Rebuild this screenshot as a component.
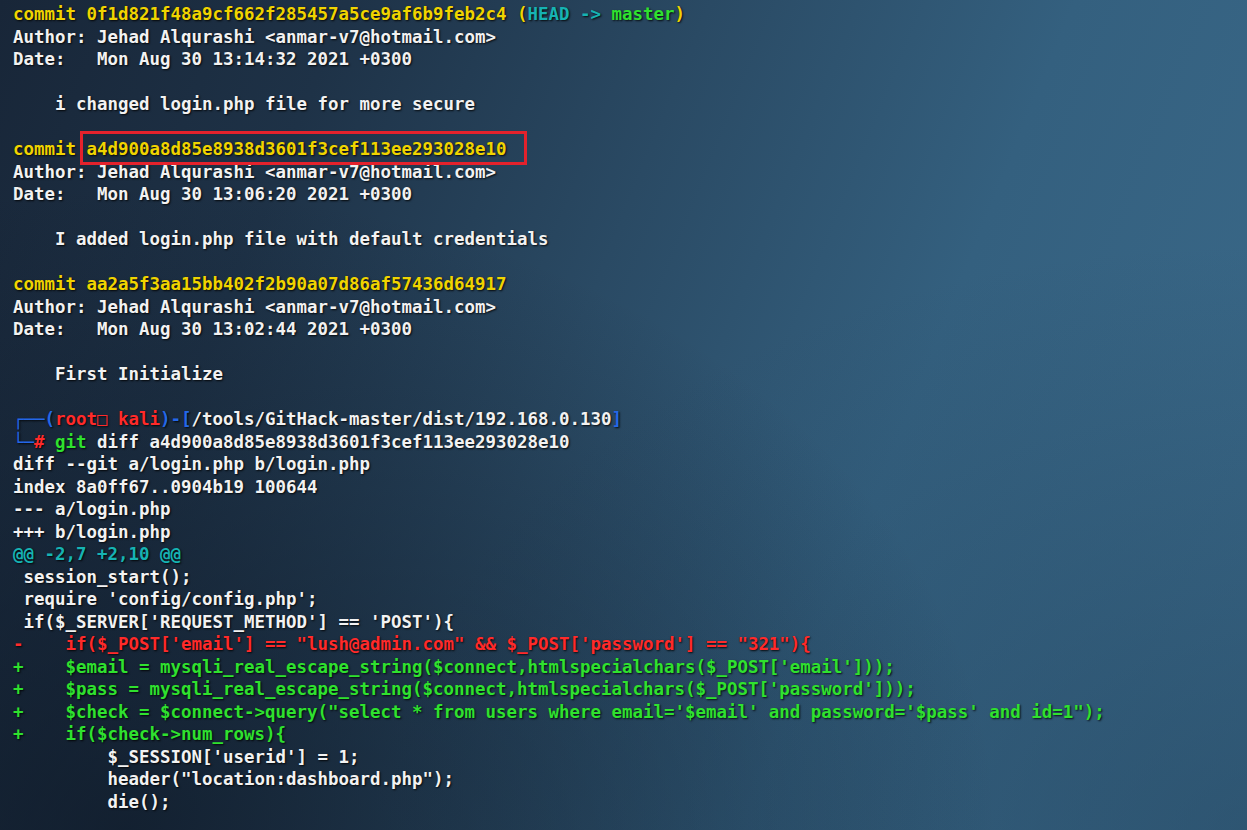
import React from "react";

type Seg = { t: string; c?: string };
type Line = Seg[];

const Y = "text-[#f0d400]";
const C = "text-[#16b3b3]";
const G = "text-[#2fe12f]";
const R = "text-[#ff2a2a]";
const B = "text-[#2468e8]";

const w = (t: string): Line => [{ t }];
const y = (t: string): Line => [{ t, c: Y }];
const r = (t: string): Line => [{ t, c: R }];
const g = (t: string): Line => [{ t, c: G }];

const lines: (Line | "boxed")[] = [
  [
    { t: "commit 0f1d821f48a9cf662f285457a5ce9af6b9feb2c4 (", c: Y },
    { t: "HEAD -> ", c: C },
    { t: "master", c: G },
    { t: ")", c: Y },
  ],
  w("Author: Jehad Alqurashi <anmar-v7@hotmail.com>"),
  w("Date:   Mon Aug 30 13:14:32 2021 +0300"),
  w(""),
  w("    i changed login.php file for more secure"),
  w(""),
  "boxed",
  w("Author: Jehad Alqurashi <anmar-v7@hotmail.com>"),
  w("Date:   Mon Aug 30 13:06:20 2021 +0300"),
  w(""),
  w("    I added login.php file with default credentials"),
  w(""),
  y("commit aa2a5f3aa15bb402f2b90a07d86af57436d64917"),
  w("Author: Jehad Alqurashi <anmar-v7@hotmail.com>"),
  w("Date:   Mon Aug 30 13:02:44 2021 +0300"),
  w(""),
  w("    First Initialize"),
  w(""),
  [
    { t: "┌──(", c: B },
    { t: "root□ kali", c: R },
    { t: ")-[", c: B },
    { t: "/tools/GitHack-master/dist/192.168.0.130" },
    { t: "]", c: B },
  ],
  [
    { t: "└─", c: B },
    { t: "#", c: R },
    { t: " " },
    { t: "git", c: G },
    { t: " diff a4d900a8d85e8938d3601f3cef113ee293028e10" },
  ],
  w("diff --git a/login.php b/login.php"),
  w("index 8a0ff67..0904b19 100644"),
  w("--- a/login.php"),
  w("+++ b/login.php"),
  [{ t: "@@ -2,7 +2,10 @@", c: C }],
  w(" session_start();"),
  w(" require 'config/config.php';"),
  w(" if($_SERVER['REQUEST_METHOD'] == 'POST'){"),
  r(`-    if($_POST['email'] == "lush@admin.com" && $_POST['password'] == "321"){`),
  g(`+    $email = mysqli_real_escape_string($connect,htmlspecialchars($_POST['email']));`),
  g(`+    $pass = mysqli_real_escape_string($connect,htmlspecialchars($_POST['password']));`),
  g(`+    $check = $connect->query("select * from users where email='$email' and password='$pass' and id=1");`),
  g(`+    if($check->num_rows){`),
  w(`         $_SESSION['userid'] = 1;`),
  w(`         header("location:dashboard.php");`),
  w(`         die();`),
];

export default function App() {
  return (
    <div className="w-[1247px] h-[830px] overflow-hidden bg-[linear-gradient(112deg,#182638_0%,#1e3247_22%,#2a4a64_45%,#34607f_68%,#3b6a8a_100%)]">
      <div className="h-full w-full bg-[radial-gradient(ellipse_at_100%_100%,rgba(30,60,85,0.45)_0%,rgba(30,60,85,0)_50%)]">
        <div className="relative h-full w-full bg-[radial-gradient(ellipse_at_10%_100%,rgba(14,24,38,0.75)_0%,rgba(14,24,38,0)_55%)]">
          <pre className="pl-[13px] pt-[3px] font-['DejaVu_Sans_Mono','Liberation_Mono',monospace] text-[17.45px] leading-[22.5px] font-bold text-[#f2f2f2] [text-shadow:1px_1px_2px_rgba(0,0,0,0.85)]">
            {lines.map((ln, i) =>
              ln === "boxed" ? (
                <div key={i} className="h-[22.5px] whitespace-pre">
                  <span className={Y}>commit </span>
                  <span className={`relative ${Y}`}>
                    a4d900a8d85e8938d3601f3cef113ee293028e10
                    <span className="absolute -left-[7px] -right-[21px] -top-[8px] -bottom-[6px] border-[3px] border-[#e4222c]" />
                  </span>
                </div>
              ) : (
                <div key={i} className="h-[22.5px] whitespace-pre">
                  {ln.map((s, j) => (
                    <span key={j} className={s.c}>
                      {s.t}
                    </span>
                  ))}
                </div>
              )
            )}
          </pre>
        </div>
      </div>
    </div>
  );
}
